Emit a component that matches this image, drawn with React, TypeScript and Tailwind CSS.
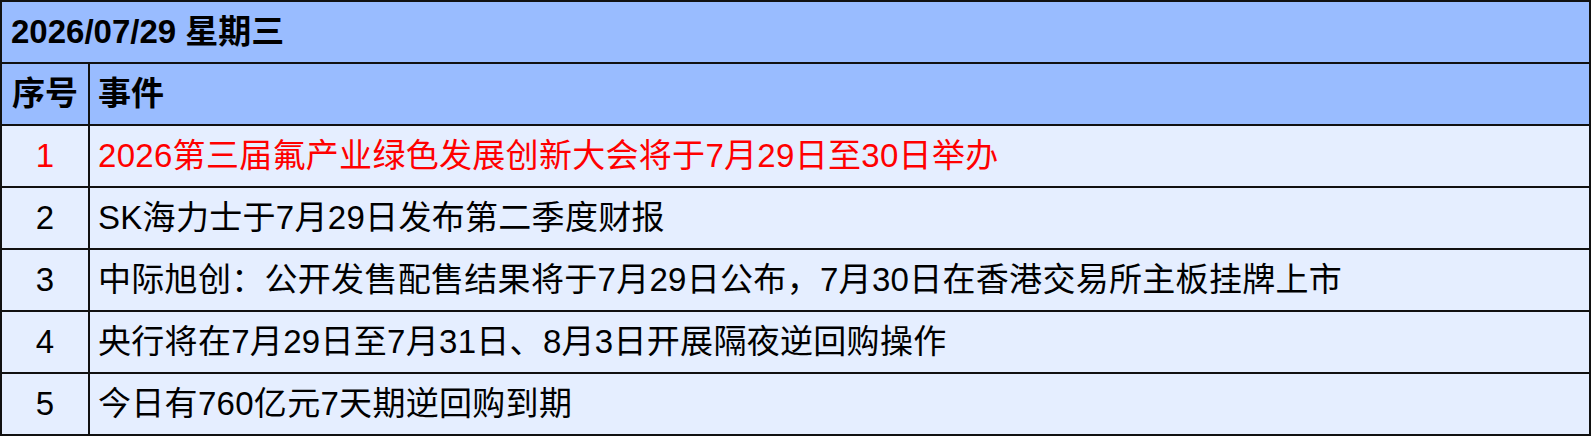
import React from 'react';

const rows = [
  { no: 1, text: '2026第三届氟产业绿色发展创新大会将于7月29日至30日举办', red: true },
  { no: 2, text: 'SK海力士于7月29日发布第二季度财报' },
  { no: 3, text: '中际旭创：公开发售配售结果将于7月29日公布，7月30日在香港交易所主板挂牌上市' },
  { no: 4, text: '央行将在7月29日至7月31日、8月3日开展隔夜逆回购操作' },
  { no: 5, text: '今日有760亿元7天期逆回购到期' },
];

const App = () => {
  return (
    <div className="w-full h-[436px] overflow-hidden bg-white font-['Liberation_Sans','Noto_Sans_CJK_SC',sans-serif] text-[33px] text-black">
      <div className="border-2 border-[#111] flex flex-col">
        <div className="h-[62px] bg-[#99bcff] border-b-2 border-[#111] flex items-center px-[9px] font-bold">
          2026/07/29 星期三
        </div>
        <div className="h-[62px] bg-[#99bcff] border-b-2 border-[#111] grid grid-cols-[88px_1fr] font-bold">
          <div className="border-r-2 border-[#111] flex items-center justify-center">序号</div>
          <div className="flex items-center pl-[8px]">事件</div>
        </div>
        {rows.map((r, i) => (
          <div
            key={r.no}
            className={`bg-[#e5eeff] grid grid-cols-[88px_1fr] ${i < rows.length - 1 ? 'h-[62px] border-b-2 border-[#111]' : 'h-[60px]'} ${r.red ? 'text-[#ff0000]' : ''}`}
          >
            <div className="border-r-2 border-[#111] flex items-center justify-center">{r.no}</div>
            <div className="flex items-center pl-[8px] whitespace-nowrap tracking-[0.3px]">{r.text}</div>
          </div>
        ))}
      </div>
    </div>
  );
};

export default App;
